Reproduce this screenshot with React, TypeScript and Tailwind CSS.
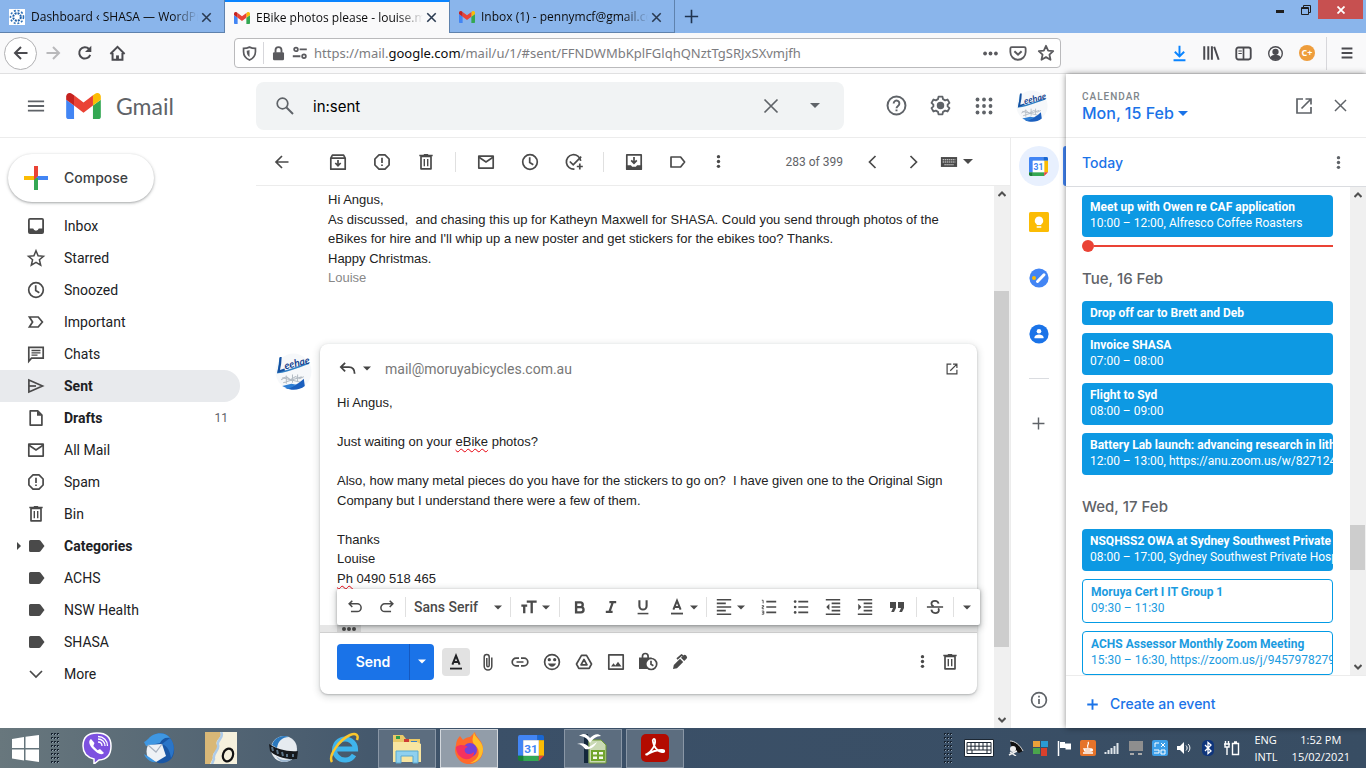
import type { ReactNode } from "react"
import clsx from "clsx"

const icons: Record<string, ReactNode> = {
  inbox: <path fill="currentColor" stroke="none" fillRule="evenodd" d="M4 2h12a2 2 0 0 1 2 2v12a2 2 0 0 1-2 2H4a2 2 0 0 1-2-2V4a2 2 0 0 1 2-2zM3.8 3.8v8.800h3.400a2.900 2.900 0 0 0 5.600 0h3.400V3.800z" />,
  star: <path d="M10 2.800l2.100 5 5.400.5-4.100 3.500 1.300 5.300-4.700-2.800-4.700 2.800 1.300-5.300L2.500 8.300l5.400-.5z" strokeWidth="1.500" />,
  clock: <><circle cx="10" cy="10" r="7.300" /><path d="M9.700 5.300v5.200l3.600 2.200" /></>,
  important: <path d="M3.400 5h8.800l4.200 5-4.200 5H3.400l3.200-5z" />,
  chat: <><path d="M2.800 17.200V3.300h14.400v10.900H5.500z" /><path d="M5.500 6.500h9M5.500 8.800h9M5.500 11.100h6" strokeWidth="1.300" /></>,
  send: <><path d="M2.900 4v12L16.500 10z" /><path d="M3 10h7" /></>,
  file: <><path d="M4.200 2.900h7.500l4.200 4.200v10H4.200z" strokeLinejoin="round" /><path d="M11 2.800v5h5z" fill="currentColor" stroke="none" /></>,
  mail: <><path d="M2.800 4.200h14.400v11.900H2.800z" strokeLinejoin="round" /><path d="M3 5.200l7 4.800 7-4.800" /></>,
  spam: <><path d="M7 2.900h6L17.100 7v6L13 17.100H7L2.900 13V7z" strokeLinejoin="round" /><path d="M10 5.700v5.300M10 12.400v1.700" /></>,
  bin: <><path d="M5 4.500h10v12.300H5z" strokeLinejoin="round" /><path d="M3.300 3.500h13.400M7.800 2.900h4.400" /><path d="M8.300 7v7.300M11.700 7v7.300" strokeWidth="1.400" /></>,
  label: <path fill="currentColor" stroke="none" d="M4.500 4H13a2 2 0 0 1 1.500.8L18.500 10l-4 5.200a2 2 0 0 1-1.500.8H4.500A1.500 1.500 0 0 1 3 14.500v-9A1.500 1.500 0 0 1 4.500 4z" />,
  labelOutline: <path d="M3 5h9.600l4 5-4 5H3z" strokeLinejoin="round" />,
  down: <path d="M4 7l6 6 6-6" />,
  left: <path d="M12.500 4l-6 6 6 6" />,
  right: <path d="M7.500 4l6 6-6 6" />,
  back: <path d="M16.500 10H4M10 4l-6 6 6 6" />,
  archive: <><path d="M2.800 6.200l1.600-3h11.200l1.600 3v11H2.800zM2.800 6.200h14.400" strokeLinejoin="round" /><path d="M10 8v5.500M7.300 11l2.700 2.700 2.700-2.700" /></>,
  moveTo: <><path d="M2.800 2.900h14.400v14.200H2.800z" strokeLinejoin="round" /><path d="M2.800 14h3.700l1.200 1.500h4.600l1.200-1.500h3.700v3H2.800z" fill="currentColor" /><path d="M10 5v6M7.200 8.400L10 11.200l2.800-2.800" /></>,
  task: <><path d="M16.700 8.800A7.200 7.200 0 1 0 10.500 17" /><path d="M5.800 9.500l3.400 3.400 8-8.300M15.800 11.500v6M12.800 14.500h6" /></>,
  dots: <g fill="currentColor" stroke="none"><circle cx="10" cy="4.300" r="2" /><circle cx="10" cy="10" r="2" /><circle cx="10" cy="15.700" r="2" /></g>,
  menu: <path d="M1 4.800h18M1 10h18M1 15.200h18" strokeWidth="2" />,
  burger: <path d="M1 2.500h18M1 10h18M1 17.500h18" strokeWidth="3.200" />,
  close: <path d="M3.500 3.500l13 13M16.500 3.500l-13 13" />,
  search: <><circle cx="7.500" cy="7.500" r="5.300" /><path d="M11.500 11.500l6.500 6.500" strokeWidth="2" /></>,
  help: <><circle cx="10" cy="10" r="7.800" /><path d="M7.500 8.200a2.500 2.500 0 1 1 4 2c-.9.700-1.500 1.200-1.500 2.200M10 13.400v1.600" /></>,
  gear: <><path d="M8.300 2.300h3.400l.5 2.200 1.800 1 2.100-.7 1.700 2.900-1.600 1.500v1.600l1.600 1.500-1.700 2.900-2.100-.7-1.800 1-.5 2.200H8.300l-.5-2.200-1.800-1-2.100.7-1.700-2.900 1.600-1.500V9.200L2.200 7.700l1.700-2.900 2.100.7 1.800-1z" strokeLinejoin="round" strokeWidth="1.600" /><circle cx="10" cy="10" r="2.400" fill="currentColor" /></>,
  apps: <g fill="currentColor" stroke="none">{[3.500, 10, 16.500].map((y) => [3.500, 10, 16.500].map((x) => <circle key={x + "-" + y} cx={x} cy={y} r="1.900" />))}</g>,
  keyboard: <><path d="M1 4.500h18v11H1z" fill="currentColor" stroke="none" /><path d="M3 7.500h14M3 10h14M5 13h10" stroke="#fff" strokeWidth="1.200" strokeDasharray="1.300 .9" /></>,
  reply: <path d="M7.500 4L3 8.500 7.500 13M3.500 8.500h8c3.500 0 6 1.500 6 7" strokeWidth="1.900" />,
  popout: <path d="M9 3H3v14h14v-6M11.500 3H17v5.500M17 3l-9.500 9.500" />,
  plus: <path d="M10 3v14M3 10h14" />,
  info: <><circle cx="10" cy="10" r="7.400" /><path d="M10 9v5M10 5.800v1.700" /></>,
  undo: <path d="M7 3L3.500 6.500 7 10M4 6.500h8.500a4.300 4.300 0 0 1 0 8.600H5.500" />,
  redo: <path d="M13 3l3.500 3.500L13 10M16 6.500H7.500a4.300 4.300 0 0 0 0 8.600h7" />,
  bold: <path d="M6 4h5a2.800 2.800 0 0 1 0 5.600H6zM6 9.600h5.700a3 3 0 0 1 0 6.100H6z" strokeWidth="2.800" />,
  italic: <path d="M8 4h8.500M3.500 16H12M12.300 4L8 16" strokeWidth="2.800" />,
  underline: <><path d="M6 2.500v6.300a4 4 0 0 0 8 0V2.500" strokeWidth="2.300" /><path d="M4 17.300h12" /></>,
  color: <><path d="M6 13l4-10 4 10M7.500 10h5" strokeWidth="2.200" /><path d="M3.300 17.300h13.400" strokeWidth="2" /></>,
  align: <path d="M2 2h16M2 6h10M2 10h16M2 14h10M2 18h16" strokeWidth="1.800" />,
  ordered: <><path d="M7 4h11M7 10h11M7 16h11" strokeWidth="1.800" /><path d="M2 2.500h1.500V6M2 8.500h2v1.500H2.500v2H4.500M2 14.500h2.200V18H2M2.500 16.200h1.500" strokeWidth="1" /></>,
  bullets: <><path d="M7 4h11M7 10h11M7 16h11" strokeWidth="1.800" /><g fill="currentColor" stroke="none"><circle cx="3.500" cy="4" r="1.500" /><circle cx="3.500" cy="10" r="1.500" /><circle cx="3.500" cy="16" r="1.500" /></g></>,
  outdent: <><path d="M2 2h16M8.500 6H18M8.500 10H18M8.500 14H18M2 18h16" strokeWidth="1.800" /><path d="M6 6.500v7L2.500 10z" fill="currentColor" stroke="none" /></>,
  indent: <><path d="M2 2h16M8.500 6H18M8.500 10H18M8.500 14H18M2 18h16" strokeWidth="1.800" /><path d="M2.500 6.500v7L6 10z" fill="currentColor" stroke="none" /></>,
  quote: <path d="M3 5h6v6l-2 4H4.200l1.800-4H3zM11 5h6v6l-2 4h-2.800l1.800-4h-3z" fill="currentColor" stroke="none" />,
  strike: <><path d="M14 6.300C13.500 4 12 3.200 10 3.200c-2.500 0-4 1.300-4 3.200 0 1.500 1 2.300 2.500 2.900M6 13c.3 2.500 2 3.700 4.200 3.700s4.100-1.200 4.100-3.300c0-.8-.3-1.400-.8-1.900" strokeWidth="2" /><path d="M1 10h18" /></>,
  clip: <path d="M13.800 5.500v8.700a3.800 3.800 0 0 1-7.600 0V5a2.500 2.500 0 0 1 5 0v8.500a1.200 1.200 0 0 1-2.400 0V6" strokeWidth="1.500" />,
  link: <path d="M9 6.200H6a3.800 3.800 0 0 0 0 7.600h3M11 6.200h3a3.800 3.800 0 0 1 0 7.600h-3M6.500 10h7" />,
  smile: <><circle cx="10" cy="10" r="7.400" /><path d="M6 11.500h8c-.6 2-2.200 3.200-4 3.200S6.600 13.500 6 11.500z" fill="currentColor" stroke="none" /><circle cx="7.300" cy="7.700" r=".8" fill="currentColor" /><circle cx="12.700" cy="7.700" r=".8" fill="currentColor" /></>,
  drive: <><path d="M7.500 3.300h5l5 8.700-2.300 4.300H4.800L2.500 12z" strokeLinejoin="round" /><path d="M10 7.500l3 5.300H7z" strokeLinejoin="round" /></>,
  image: <><path d="M2.800 2.900h14.400v14.200H2.800z" strokeLinejoin="round" /><path d="M5 14.500l2.500-3.300 1.800 2.200L12 9.800l3.500 4.700z" fill="currentColor" stroke="none" /></>,
  lock: <><path d="M4.500 6.500V4.300a2.800 2.800 0 0 1 5.600 0v2.200" /><path d="M1 5.500h12.500V17H1z" fill="currentColor" stroke="none" /><circle cx="13.200" cy="12" r="5.500" fill="#fff" /><path d="M13 8.700v3.600l2.400 1.500" /></>,
  pen: <><path d="M3 17l.8-4L10 6.800 13.200 10 7 16.200zM11 5.800l2.300-2.300a2 2 0 0 1 2.800 0l.4.4a2 2 0 0 1 0 2.800L14.200 9z" fill="currentColor" stroke="none" /><path d="M7 7l4.500-4 1.500 1" /></>,
  reload: <><path d="M15.800 12A6.300 6.300 0 1 1 14.500 5.500" strokeWidth="2.200" /><path d="M17 2v7h-7z" fill="currentColor" stroke="none" /></>,
  home: <><path d="M2.500 10.500L10 3l7.500 7.500" strokeWidth="2" /><path d="M4.800 9.500v7.200h10.400V9.500" strokeWidth="2.100" /><path d="M10 17v-5" strokeWidth="3" /></>,
  shield: <><path d="M10 2.500c2 1 4.500 1.500 7 1.500v4c0 5-3 8-7 9.700C6 16 3 13 3 8V4c2.500 0 5-.5 7-1.500z" strokeWidth="2" /><path d="M10 6v8c-2-1-3.300-3.300-3.300-7.300C8 6.700 9 6.500 10 6z" fill="currentColor" stroke="none" /></>,
  padlock: <><path d="M6.500 9V6a3.500 3.500 0 0 1 7 0v3" strokeWidth="2.200" /><rect x="3.500" y="8.500" width="13" height="9.500" rx="1.500" fill="currentColor" stroke="none" /></>,
  perms: <><circle cx="5" cy="5.500" r="2.300" strokeWidth="2.200" /><path d="M9.500 5.500h9M1 14h9.500" strokeWidth="2.400" /><circle cx="15" cy="14" r="2.300" strokeWidth="2.200" /></>,
  pocket: <><path d="M3 3.500h14a1.500 1.500 0 0 1 1.500 1.500v4a8.500 8.500 0 0 1-17 0V5A1.500 1.500 0 0 1 3 3.500z" strokeWidth="2" /><path d="M6 8l4 3.800L14 8" strokeWidth="2.200" /></>,
  bookmark: <path d="M10 2l2.400 5.300 5.600.6-4.200 3.900 1.200 5.700L10 14.600l-5 2.900 1.200-5.700L2 7.900l5.600-.6z" strokeWidth="2" strokeLinejoin="round" />,
  download: <path d="M10 1v12M4.500 8L10 13.500 15.500 8M3 18h14" strokeWidth="2.300" />,
  library: <path d="M2.500 2.500v15M7 2.500v15M11 2.500v15M13.500 3l5 14.500" strokeWidth="2.200" />,
  sidebar: <><rect x="1.500" y="3" width="17" height="14" rx="2.500" strokeWidth="2.200" /><path d="M10 3v14" strokeWidth="2" /><path d="M4 7h4M4 10h4" strokeWidth="1.300" /></>,
  account: <><circle cx="10" cy="10" r="8" strokeWidth="1.600" /><circle cx="10" cy="8" r="3.700" fill="currentColor" stroke="none" /><path d="M4 14.500c1-2.200 3.500-3 6-3s5 .8 6 3a7.500 7.500 0 0 1-12 0z" fill="currentColor" stroke="none" /></>,
  textSize: <path d="M7.500 4h11M13 4v13M1.500 8.500h6.500M4.700 8.500V17" strokeWidth="2.600" />,
}

const Icon = ({ name, size = 20, className }: { name: string; size?: number; className?: string }) => (
  <svg width={size} height={size} viewBox="0 0 20 20" fill="none" stroke="currentColor" strokeWidth="1.700" className={clsx("shrink-0", className)} aria-hidden="true">
    {icons[name]}
  </svg>
)

const Caret = ({ className }: { className?: string }) => (
  <svg width="10" height="5" viewBox="0 0 10 5" className={clsx("shrink-0", className)} aria-hidden="true"><path d="M0 0h10L5 5z" fill="currentColor" /></svg>
)

interface IconButtonProps {
  icon: string
  label: string
  size?: number
  className?: string
}

const IconButton = ({ icon, label, size, className }: IconButtonProps) => (
  <button aria-label={label} className={clsx("flex shrink-0 items-center justify-center cursor-pointer", className)}>
    <Icon name={icon} size={size} />
  </button>
)

const GmailLogo = ({ className }: { className?: string }) => (
  <svg viewBox="52 42 88 66" className={clsx("shrink-0", className)} aria-hidden="true">
    <path fill="#4285f4" d="M58 108h14V74L52 59v43c0 3.320 2.690 6 6 6" />
    <path fill="#34a853" d="M120 108h14c3.320 0 6-2.690 6-6V59l-20 15" />
    <path fill="#fbbc04" d="M120 48v26l20-15v-8c0-7.420-8.470-11.650-14.400-7.200" />
    <path fill="#ea4335" d="M72 74V48l24 18 24-18v26L96 92" />
    <path fill="#c5221f" d="M52 51v8l20 15V48l-5.600-4.200c-5.940-4.450-14.400-.220-14.400 7.200" />
  </svg>
)

const CalendarLogo = ({ size }: { size: number }) => (
  <svg width={size} height={size} viewBox="0 0 20 20" aria-hidden="true">
    <path d="M1.500 0H15v4H4v12H0V1.500A1.500 1.500 0 0 1 1.500 0z" fill="#4285f4" />
    <path d="M16 0h2.500A1.500 1.500 0 0 1 20 1.500V4h-5V0z" fill="#1967d2" />
    <path d="M16 4h4v12h-4z" fill="#fbbc04" />
    <path d="M4 16h12v4H4z" fill="#34a853" />
    <path d="M0 16h4v4H1.500A1.500 1.500 0 0 1 0 18.500z" fill="#188038" />
    <path d="M16 16h4l-4 4z" fill="#ea4335" />
    <path d="M4 4h12v12H4z" fill="#fff" />
    <text x="10" y="13.500" textAnchor="middle" fontSize="9" fontWeight="700" fontFamily="Roboto, sans-serif" fill="#4285f4">31</text>
  </svg>
)

const Avatar = ({ size }: { size: number }) => (
  <svg width={size} height={size} viewBox="0 0 36 36" className="shrink-0" aria-hidden="true">
    <circle cx="18" cy="18" r="17.500" fill="#f6f8fa" />
    <path d="M5 5c-.5 6-1 9-2 14 9-1 18-5 30-9" fill="none" stroke="#2f7fc4" strokeWidth="1.500" />
    <path d="M5.500 4c0 5-1 10-2 14l6-2" fill="none" stroke="#1450a0" strokeWidth="2" />
    <text x="10" y="16" fontSize="10" fontStyle="italic" fontFamily="Lato, sans-serif" fontWeight="700" fill="#16438f" transform="rotate(-14 10 16)">eehae</text>
    <path d="M6 26l5-3 4 3 5-3 4 2 4-2M8 29l18-6M7 24l20 5M11 22v8M17 21v8M22 21v7" fill="none" stroke="#b4bcc4" strokeWidth="1" />
    <path d="M10 34c8-1 14-5 18-9l1 7c-5 4-12 5-19 2z" fill="#1b5fbe" />
    <path d="M7 32l9-2 5 1-8 4z" fill="#2f7fd4" />
  </svg>
)

const tabs = [
  { title: "Dashboard ‹ SHASA — WordPress", icon: "site" },
  { title: "EBike photos please - louise.mcf@gmail", icon: "gmail", active: true },
  { title: "Inbox (1) - pennymcf@gmail.com", icon: "gmail" },
]

const BrowserChrome = () => (
  <header className="shrink-0 font-['Open_Sans',sans-serif]">
    <div className="flex h-[33px] bg-[#8ab5eb]">
      {tabs.map((tab) => (
        <div
          key={tab.title}
          className={clsx(
            "flex w-[225px] shrink-0 items-center border-r border-r-[#5f82ad] pr-[11px] pl-[9px]",
            tab.active ? "border-t-2 border-t-[#0a84ff] bg-[#f9f9fa]" : "border-b border-b-[#5f82ad] pt-[2px]"
          )}
        >
          {tab.icon === "site" ? (
            <svg width="16" height="16" viewBox="0 0 16 16" className="shrink-0" aria-hidden="true">
              <path d="M0 0h16v16H0z" fill="#fff" />
              <circle cx="8" cy="8" r="3.800" fill="none" stroke="#1d5fa8" strokeWidth="2" strokeDasharray="2 1" />
              <circle cx="8" cy="8" r="6.500" fill="none" stroke="#2d71b8" strokeWidth="1.600" strokeDasharray="2 1.800" />
            </svg>
          ) : (
            <GmailLogo className="h-3 w-4" />
          )}
          <a href="#" className="ml-[6px] flex-1 overflow-hidden text-xs whitespace-nowrap text-[#0c0c0d] [mask-image:linear-gradient(to_right,black_85%,transparent)]">
            {tab.title}
          </a>
          <IconButton icon="close" label="Close tab" size={13} className="ml-[2px] text-[#2a3a50] [&_svg]:[stroke-width:2.4]" />
        </div>
      ))}
      <IconButton icon="plus" label="New tab" size={19} className="w-8 text-[#20344f]" />
      <div className="ml-auto flex h-[19px] pr-[3px]">
        <button aria-label="Minimise" className="flex w-7 items-center justify-center pt-1"><span className="h-[3px] w-2 bg-[#1e1e1e]" /></button>
        <button aria-label="Restore" className="flex w-6 items-center justify-center">
          <svg width="10" height="10" viewBox="0 0 10 10" fill="none" stroke="#1e1e1e"><path d="M.5 2.500h7v7h-7zM.5 3.500h7M2.500 2V.500h7v7H8" /></svg>
        </button>
        <button aria-label="Close window" className="flex w-[45px] items-center justify-center bg-[#c75050] text-white">
          <svg width="8" height="8" viewBox="0 0 8 8" stroke="currentColor" strokeWidth="1.800"><path d="M.5.5l7 7M7.500.5l-7 7" /></svg>
        </button>
      </div>
    </div>
    <div className="flex h-[41px] items-center border-b border-[#e0e0e1] bg-[#f9f9fa] text-[#4a4a4f]">
      <button aria-label="Back" className="ml-1 flex size-[33px] shrink-0 items-center justify-center rounded-full border border-[#b1b1b3] bg-white"><Icon name="back" size={20} className="[stroke-width:2]" /></button>
      <button aria-label="Forward" className="flex w-8 justify-center text-[#b9b9bb]"><Icon name="back" className="rotate-180 [stroke-width:2]" /></button>
      <IconButton icon="reload" label="Reload" size={18} className="w-8" />
      <IconButton icon="home" label="Home" size={19} className="w-8" />
      <div className="ml-[101px] flex h-[30px] w-[827px] min-w-0 shrink items-center rounded-sm border border-[#bababc] bg-white text-[#5a5a5e]">
        <IconButton icon="shield" label="Tracking protection" size={17} className="w-7" />
        <span className="h-[22px] w-px bg-[#d7d7db]" />
        <IconButton icon="padlock" label="Site security" size={17} className="w-7" />
        <Icon name="perms" size={16} />
        <div role="textbox" aria-label="Address" className="ml-[6px] flex-1 overflow-hidden pt-[2px] font-['Noto_Sans',sans-serif] text-[13px] whitespace-nowrap text-[#7c7c80]">
          https://mail.<span className="text-[#0c0c0d]">google.com</span>/mail/u/1/#sent/FFNDWMbKplFGlqhQNztTgSRJxSXvmjfh
        </div>
        <button aria-label="Page actions" className="flex w-7 justify-center"><Icon name="dots" size={19} className="rotate-90" /></button>
        <IconButton icon="pocket" label="Save to Pocket" size={18} className="w-7" />
        <IconButton icon="bookmark" label="Bookmark" size={18} className="w-7" />
      </div>
      <div className="ml-auto flex h-full items-center">
        <IconButton icon="download" label="Downloads" size={17} className="w-8 text-[#0a84ff]" />
        <IconButton icon="library" label="Library" size={18} className="w-8" />
        <IconButton icon="sidebar" label="Sidebar" size={17} className="w-8" />
        <IconButton icon="account" label="Account" size={17} className="w-8" />
        <button aria-label="Extension" className="flex w-8 justify-center"><span className="flex size-4 items-center justify-center rounded-full bg-[#ee9d3c] text-[9px] font-bold text-white">C+</span></button>
        <span className="ml-[3px] h-[33px] w-px bg-[#d7d7db]" />
        <IconButton icon="burger" label="Menu" size={12} className="w-[39px]" />
      </div>
    </div>
  </header>
)

const GmailHeader = () => (
  <div className="flex h-16 shrink-0 items-center border-b border-[#ececec] text-[#5f6368]">
    <IconButton icon="menu" label="Main menu" size={18} className="ml-[18px] w-9" />
    <GmailLogo className="ml-3 h-[26px] w-[35px]" />
    <span className="ml-[15px] w-[140px] pt-[2px] font-[Lato,sans-serif] text-[23px]">Gmail</span>
    <div className="flex h-12 max-w-[588px] flex-1 items-center rounded-lg bg-[#f1f3f4]">
      <IconButton icon="search" label="Search" size={20} className="w-[57px]" />
      <input aria-label="Search mail" defaultValue="in:sent" className="min-w-0 flex-1 bg-transparent pt-1 font-[Inter,sans-serif] text-[15px] text-black outline-none" />
      <IconButton icon="close" label="Clear search" size={20} className="w-11" />
      <button aria-label="Search options" className="mr-[7px] flex w-11 justify-center"><Caret /></button>
    </div>
    <div className="ml-auto flex items-center pr-[18px]">
      <IconButton icon="help" label="Support" size={23} className="w-11" />
      <IconButton icon="gear" label="Settings" size={23} className="w-11" />
      <IconButton icon="apps" label="Google apps" size={20} className="w-11" />
      <button aria-label="Google account" className="ml-[10px]"><Avatar size={32} /></button>
    </div>
  </div>
)

const folders = [
  { name: "Inbox", icon: "inbox" },
  { name: "Starred", icon: "star" },
  { name: "Snoozed", icon: "clock" },
  { name: "Important", icon: "important" },
  { name: "Chats", icon: "chat" },
  { name: "Sent", icon: "send", bold: true, selected: true },
  { name: "Drafts", icon: "file", bold: true, count: 11 },
  { name: "All Mail", icon: "mail" },
  { name: "Spam", icon: "spam" },
  { name: "Bin", icon: "bin" },
  { name: "Categories", icon: "label", bold: true, expandable: true },
  { name: "ACHS", icon: "label" },
  { name: "NSW Health", icon: "label" },
  { name: "SHASA", icon: "label" },
  { name: "More", icon: "down" },
]

const Sidebar = () => (
  <nav className="w-64 shrink-0 pt-4">
    <button className="mb-2 ml-2 flex h-12 w-[146px] items-center rounded-full bg-white pl-4 font-[Inter,sans-serif] text-sm font-medium text-[#3c4043] shadow-[0_1px_2px_rgba(60,64,67,0.3),0_1px_3px_1px_rgba(60,64,67,0.15)]">
      <svg width="24" height="24" viewBox="0 0 24 24" className="mr-4" aria-hidden="true">
        <path fill="#fbbc04" d="M0 10h12v4H0z" />
        <path fill="#4285f4" d="M12 10h12v4H12z" />
        <path fill="#34a853" d="M10 12h4v12h-4z" />
        <path fill="#ea4335" d="M10 0h4v10l-4 4z" />
      </svg>
      Compose
    </button>
    {folders.map((folder) => (
      <a
        key={folder.name}
        href="#"
        className={clsx(
          "mr-4 flex h-8 items-center rounded-r-full pr-3 text-sm text-[#202124]",
          folder.bold && "font-bold",
          folder.selected && "bg-[#e8eaed]"
        )}
      >
        <span className="flex w-[26px] justify-end pr-[5px] text-[#444746]">
          {folder.expandable && <svg width="4" height="8" viewBox="0 0 4 8"><path d="M0 0l4 4-4 4z" fill="currentColor" /></svg>}
        </span>
        <Icon name={folder.icon} className="text-[#4a4a4a]" />
        <span className="ml-[18px] flex-1">{folder.name}</span>
        {folder.count && <span className="text-xs font-normal text-[#5f6368]">{folder.count}</span>}
      </a>
    ))}
  </nav>
)

const MailToolbar = () => (
  <div className="flex h-12 shrink-0 items-center border-b border-[#ececec] text-[#4a4a4a]">
    <IconButton icon="back" label="Back to Sent" className="mr-2 w-[52px]" />
    <IconButton icon="archive" label="Archive" className="w-11" />
    <IconButton icon="spam" label="Report spam" className="w-11" />
    <IconButton icon="bin" label="Delete" className="w-11" />
    <span className="mr-2 ml-[7px] h-5 w-px bg-[#e0e0e0]" />
    <IconButton icon="mail" label="Mark as unread" className="w-11" />
    <IconButton icon="clock" label="Snooze" className="w-11" />
    <IconButton icon="task" label="Add to tasks" className="w-11" />
    <span className="mr-2 ml-[7px] h-5 w-px bg-[#e0e0e0]" />
    <IconButton icon="moveTo" label="Move to" className="w-11" />
    <IconButton icon="labelOutline" label="Labels" className="w-11" />
    <IconButton icon="dots" label="More" size={17} className="w-9" />
    <span className="mr-[10px] ml-auto text-xs text-[#5f6368]">283 of 399</span>
    <IconButton icon="left" label="Newer" className="w-10" />
    <IconButton icon="right" label="Older" className="w-10" />
    <button aria-label="Input tools" className="mr-[37px] ml-[7px] flex items-center"><Icon name="keyboard" size={18} /><Caret className="ml-[5px]" /></button>
  </div>
)

const Scrollbar = ({ thumbClass }: { thumbClass: string }) => (
  <div className="relative flex w-4 shrink-0 flex-col items-center justify-between bg-[#f0f0f0] py-1 text-[#505050]">
    <svg width="8" height="8" viewBox="0 0 8 8" fill="none" stroke="currentColor" strokeWidth="2"><path d="M.5 6L4 2.500 7.500 6" /></svg>
    <span className={clsx("absolute right-px left-0 bg-[#cdcdcd]", thumbClass)} />
    <svg width="8" height="8" viewBox="0 0 8 8" fill="none" stroke="currentColor" strokeWidth="2"><path d="M.5 2L4 5.500 7.500 2" /></svg>
  </div>
)

const Separator = () => <span className="h-5 w-px shrink-0 bg-[#e0e0e0]" />

const misspelt = "underline decoration-red-600 decoration-wavy decoration-1 underline-offset-2"

const ReplyCard = () => (
  <div className="flex h-[350px] flex-col rounded-lg bg-white shadow-[0_1px_2px_rgba(60,64,67,0.3),0_2px_6px_2px_rgba(60,64,67,0.15)]">
    <div className="flex h-[49px] shrink-0 items-center pr-[18px] pl-[18px] text-[#444]">
      <button aria-label="Type of response" className="flex items-center"><Icon name="reply" size={19} /><Caret className="ml-[6px] w-2" /></button>
      <span className="ml-[14px] flex-1 pt-px text-sm text-[#777]">mail@moruyabicycles.com.au</span>
      <IconButton icon="popout" label="Pop out reply" size={14} />
    </div>
    <div role="textbox" aria-label="Message body" contentEditable suppressContentEditableWarning spellCheck={false} className="min-h-0 flex-1 overflow-hidden px-[17px] font-['Liberation_Sans',sans-serif] text-[13px] leading-normal text-[#222] outline-none">
      <p>Hi Angus,</p>
      <br />
      <p>Just waiting on your <span className={misspelt}>eBike</span> photos?</p>
      <br />
      <p>Also, how many metal pieces do you have for the stickers to go on?&nbsp; I have given one to the Original Sign Company but I understand there were a few of them.</p>
      <br />
      <p>Thanks</p>
      <p>Louise</p>
      <p><span className={misspelt}>Ph</span> 0490 518 465</p>
    </div>
    <div className="z-10 -mr-[3px] ml-[17px] flex h-9 shrink-0 items-center rounded-xs bg-white text-[#4a4a4a] shadow-[0_1px_3px_rgba(60,64,67,0.4),0_2px_6px_2px_rgba(60,64,67,0.2)]">
      <IconButton icon="undo" label="Undo" size={18} className="ml-[2px] w-8" />
      <IconButton icon="redo" label="Redo" size={18} className="mr-[2px] w-8" />
      <Separator />
      <label className="flex items-center">
        <select aria-label="Font" className="w-[88px] appearance-none pl-2 text-sm font-medium outline-none"><option>Sans Serif</option></select>
        <Caret className="mr-2 w-2" />
      </label>
      <Separator />
      <button aria-label="Size" className="flex w-12 items-center justify-center gap-1"><Icon name="textSize" size={18} /><Caret className="w-2" /></button>
      <Separator />
      <IconButton icon="bold" label="Bold" size={17} className="ml-[3px] w-8" />
      <IconButton icon="italic" label="Italic" size={16} className="w-8" />
      <IconButton icon="underline" label="Underline" size={18} className="w-8" />
      <button aria-label="Text colour" className="flex w-[47px] items-center justify-center gap-1"><Icon name="color" size={18} /><Caret className="w-2" /></button>
      <Separator />
      <button aria-label="Align" className="flex w-[46px] items-center justify-center gap-1"><Icon name="align" size={18} /><Caret className="w-2" /></button>
      <IconButton icon="ordered" label="Numbered list" size={18} className="w-8" />
      <IconButton icon="bullets" label="Bulleted list" size={18} className="w-8" />
      <IconButton icon="outdent" label="Indent less" size={18} className="w-8" />
      <IconButton icon="indent" label="Indent more" size={18} className="w-8" />
      <IconButton icon="quote" label="Quote" size={20} className="mr-[3px] w-8" />
      <Separator />
      <IconButton icon="strike" label="Strikethrough" size={18} className="w-9" />
      <Separator />
      <button aria-label="More formatting options" className="flex flex-1 justify-center"><Caret className="w-2" /></button>
    </div>
    <div className="h-2 shrink-0 overflow-hidden border-b border-[#d0d0d0] bg-[#e6e6e6] pl-[17px]">
      <button aria-label="Show trimmed content" className="flex h-2 w-6 items-center justify-center gap-px bg-[#d0d0d0]">
        <i className="size-1 rounded-full bg-[#444]" />
        <i className="size-1 rounded-full bg-[#444]" />
        <i className="size-1 rounded-full bg-[#444]" />
      </button>
    </div>
    <div className="flex h-[61px] shrink-0 items-center pr-[11px] pb-1 pl-[17px] text-[#4a4a4a]">
      <div className="mr-2 flex h-9 overflow-hidden rounded bg-[#1a73e8] text-white">
        <button className="w-[73px] border-r border-[#1559c0] font-[Inter,sans-serif] text-sm font-semibold">Send</button>
        <button aria-label="More send options" className="flex w-6 items-center justify-center"><Caret className="w-2" /></button>
      </div>
      <button aria-label="Formatting options" className="mr-[2px] flex size-7 items-center justify-center rounded bg-[#e2e2e2] text-[#202124]"><Icon name="color" size={18} /></button>
      <IconButton icon="clip" label="Attach files" className="w-8" />
      <IconButton icon="link" label="Insert link" className="w-8" />
      <IconButton icon="smile" label="Insert emoji" className="w-8" />
      <IconButton icon="drive" label="Insert from Drive" className="w-8" />
      <IconButton icon="image" label="Insert photo" className="w-8" />
      <IconButton icon="lock" label="Confidential mode" className="w-8" />
      <IconButton icon="pen" label="Insert signature" className="w-8" />
      <IconButton icon="dots" label="More options" size={17} className="ml-auto w-6" />
      <IconButton icon="bin" label="Discard draft" className="w-8" />
    </div>
  </div>
)

const Conversation = () => (
  <div className="min-w-0 flex-1 overflow-hidden pr-[17px]">
    <div className="ml-[72px] h-[158px] pt-1 pr-4 font-['Liberation_Sans',sans-serif] text-[13px] leading-normal text-[#222]">
      <p>Hi Angus,</p>
      <p>As discussed,&nbsp; and chasing this up for Katheyn Maxwell for SHASA. Could you send through photos of the eBikes for hire and I'll whip up a new poster and get stickers for the ebikes too? Thanks.</p>
      <p>Happy Christmas.</p>
      <p className="text-[#888]">Louise</p>
    </div>
    <div className="flex">
      <div className="w-16 shrink-0 pt-[9px] pl-[19px]"><Avatar size={37} /></div>
      <div className="min-w-0 flex-1"><ReplyCard /></div>
    </div>
  </div>
)

const SidePanel = () => (
  <aside className="flex w-14 shrink-0 flex-col items-center border-l border-[#ececec] pt-2 text-[#5f6368]">
    <div className="relative mb-4 flex w-full justify-center">
      <button aria-label="Calendar" className="flex size-10 items-center justify-center rounded-full bg-[#e8f0fe]"><CalendarLogo size={19} /></button>
      <span className="absolute top-0 right-0 h-10 w-[3px] rounded-l bg-[#4285f4]" />
    </div>
    <button aria-label="Keep" className="mb-4 flex size-10 items-center justify-center">
      <svg width="20" height="20" viewBox="0 0 20 20"><rect width="20" height="20" rx="1.500" fill="#fbbc04" /><path d="M10 4.500a4.200 4.200 0 0 0-2.300 7.700V13h4.600v-.8A4.200 4.200 0 0 0 10 4.500zM7.700 14.200h4.600v1.500H7.700z" fill="#fff" /></svg>
    </button>
    <button aria-label="Tasks" className="mb-4 flex size-10 items-center justify-center">
      <svg width="20" height="20" viewBox="0 0 20 20"><circle cx="10" cy="10" r="9.600" fill="#4285f4" /><circle cx="5" cy="10" r="2" fill="#fbbc04" /><path d="M8.500 13.500l6.500-6.700" stroke="#fff" strokeWidth="3" strokeLinecap="round" /></svg>
    </button>
    <button aria-label="Contacts" className="flex size-10 items-center justify-center">
      <svg width="20" height="20" viewBox="0 0 20 20"><circle cx="10" cy="10" r="9.600" fill="#1a73e8" /><circle cx="10" cy="7.200" r="2.300" fill="#fff" /><path d="M5.500 14.300v-1c0-1.800 2.500-2.800 4.500-2.800s4.500 1 4.500 2.800v1z" fill="#fff" /></svg>
    </button>
    <span className="mt-6 h-px w-5 bg-[#dadce0]" />
    <IconButton icon="plus" label="Get add-ons" size={17} className="mt-6 size-10" />
    <IconButton icon="info" label="Side panel info" className="mt-auto mb-2 size-10" />
  </aside>
)

interface CalendarEvent {
  title: string
  time?: string
  outlined?: boolean
}

const EventCard = ({ title, time, outlined }: CalendarEvent) => (
  <a
    href="#"
    className={clsx(
      "mb-2 block overflow-hidden rounded px-2 pt-1 text-xs leading-4 whitespace-nowrap",
      time ? "pb-[6px]" : "pb-1",
      outlined ? "border border-[#039be5] bg-white text-[#1b9be0]" : "bg-[#0d99e3] text-white"
    )}
  >
    <div className="font-bold">{title}</div>
    {time && <div>{time}</div>}
  </a>
)

const tuesday: CalendarEvent[] = [
  { title: "Drop off car to Brett and Deb" },
  { title: "Invoice SHASA", time: "07:00 – 08:00" },
  { title: "Flight to Syd", time: "08:00 – 09:00" },
  { title: "Battery Lab launch: advancing research in lithium", time: "12:00 – 13:00, https://anu.zoom.us/w/82712488" },
]

const wednesday: CalendarEvent[] = [
  { title: "NSQHSS2 OWA at Sydney Southwest Private Hospital", time: "08:00 – 17:00, Sydney Southwest Private Hospital" },
  { title: "Moruya Cert I IT Group 1", time: "09:30 – 11:30", outlined: true },
  { title: "ACHS Assessor Monthly Zoom Meeting", time: "15:30 – 16:30, https://zoom.us/j/94579782794", outlined: true },
]

const CalendarPanel = () => (
  <aside className="z-10 flex w-[300px] shrink-0 flex-col bg-white text-[#5f6368] shadow-[0_0_6px_rgba(0,0,0,0.45)]">
    <div className="flex h-16 shrink-0 items-center border-b border-[#ececec] pl-4">
      <div className="flex-1 pt-[3px]">
        <div className="text-[10px] leading-3 font-medium tracking-[1px] text-[#80868b]">CALENDAR</div>
        <button className="flex items-center font-[Inter,sans-serif] text-base leading-5 font-medium text-[#1a73e8]">Mon, 15 Feb<Caret className="ml-1" /></button>
      </div>
      <IconButton icon="popout" label="Open in new tab" size={20} className="w-9" />
      <IconButton icon="close" label="Close" size={17} className="mr-2 w-9" />
    </div>
    <div className="flex h-[49px] shrink-0 items-center border-b border-[#dadce0] pr-[10px] pl-4">
      <button className="flex-1 pt-px text-left font-[Inter,sans-serif] text-sm font-medium text-[#1a73e8]">Today</button>
      <IconButton icon="dots" label="Options" size={17} className="w-9" />
    </div>
    <div className="flex min-h-0 flex-1">
      <div className="min-w-0 flex-1 overflow-hidden pt-2 pr-[17px] pl-4">
        <EventCard title="Meet up with Owen re CAF application" time="10:00 – 12:00, Alfresco Coffee Roasters" />
        <div className="-mt-[5px] flex items-center">
          <span className="size-3 rounded-full bg-[#ea4335]" />
          <span className="h-[2px] flex-1 bg-[#ea4335]" />
        </div>
        <h2 className="mt-[17px] mb-3 font-[Inter,sans-serif] text-[15px] leading-5 font-medium">Tue, 16 Feb</h2>
        {tuesday.map((event) => <EventCard key={event.title} {...event} />)}
        <h2 className="mt-[22px] mb-3 font-[Inter,sans-serif] text-[15px] leading-5 font-medium">Wed, 17 Feb</h2>
        {wednesday.map((event) => <EventCard key={event.title} {...event} />)}
      </div>
      <Scrollbar thumbClass="top-[338px] h-[45px]" />
    </div>
    <button className="flex h-[53px] shrink-0 items-center border-t border-[#ececec] pt-1 pl-[19px] font-[Inter,sans-serif] text-sm font-medium text-[#1a73e8]">
      <Icon name="plus" size={15} className="mr-[10px] [stroke-width:2.5]" />
      Create an event
    </button>
  </aside>
)

const Grip = () => (
  <svg width="10" height="32" viewBox="0 0 10 32" className="shrink-0" aria-hidden="true">
    {[1, 5, 9, 13, 17, 21, 25, 29].map((y) => (
      <g key={y}>
        <path d={`M1 ${y}h2v2H1zM4 ${y}h2v2H4zM7 ${y}h2v2H7z`} fill="#16212e" />
        <path d={`M2 ${y + 1}h1v1H2zM5 ${y + 1}h1v1H5zM8 ${y + 1}h1v1H8z`} fill="#93a3b3" />
      </g>
    ))}
  </svg>
)

const pinned = [
  {
    name: "Viber",
    art: (
      <>
        <path d="M16 1c9 0 14 3.500 14 13s-4 13.500-12 14l-5 4v-5C5 25 2 21 2 14 2 4.500 7 1 16 1z" fill="#7d51e0" stroke="#fff" strokeWidth="1.500" />
        <path d="M10 7c-3 2-2 6 2 10s8 7 11 4l-4-4-2.500 1.200L12.300 14l1.200-3z" fill="#fff" />
        <path d="M17 7c4 0 7 3 7 7M17 10c2.500 0 4 1.500 4 4M17 4.500c5.500 0 9.500 4 9.500 9.500" fill="none" stroke="#fff" strokeWidth="1.300" />
      </>
    ),
  },
  {
    name: "Thunderbird",
    art: (
      <>
        <path d="M7 7C11 0 22-1 27 6c6 8 5 18 0 22-5 4-11 4-14 2z" fill="#1a57a5" />
        <path d="M1 10c3-1 5-5 9-7 6-3 14-2 17 3-5-1-8 1-10 5L3 14z" fill="#3f97e2" />
        <path d="M27 6c5 6 5 14 1 20-1-6-3-12-9-14z" fill="#2a75c8" />
        <path d="M5 13l14-1 4 12-10 6-8-4c-2-4-2-9 0-13z" fill="#eef2f6" />
        <path d="M5 13l8 7 6-8" fill="none" stroke="#a9b3c0" strokeWidth="1.200" />
        <path d="M1 22c2 5 7 9 12 8l-7-5z" fill="#3f97e2" />
      </>
    ),
  },
  {
    name: "OpenCPN",
    art: (
      <>
        <path d="M0 0h32v32H0z" fill="#f6f1dd" />
        <path d="M0 0h15c4 5-6 8-3 13s-6 7-4 13l-3 6H0z" fill="#d9b877" />
        <path d="M16 0c4 6-5 8-3 13s-6 8-4 14l-2 5" fill="none" stroke="#aecbe8" strokeWidth="2.500" />
        <ellipse cx="23" cy="23" rx="5" ry="6.500" fill="none" stroke="#111" strokeWidth="2.200" transform="rotate(20 23 23)" />
      </>
    ),
  },
  {
    name: "Video player",
    art: (
      <>
        <circle cx="17" cy="17" r="13" fill="#e6ebf0" />
        <path d="M5 13A13 13 0 0 1 22 5c-7 0-11 4-12 11z" fill="#2b78bd" />
        <path d="M9 24c5 5 12 5 18 1-3 4-7 5-10 5s-6-2-8-6z" fill="#9cb6cf" />
        <path d="M2 12c8 5 18 8 29 7l-1 8C18 28 8 24 3 19z" fill="#15181c" />
        <path d="M5 15l1 4M10 18l1 4M15 20l1 4M20 22v3M26 22v3" stroke="#5c7488" strokeWidth="2" />
      </>
    ),
  },
  {
    name: "Internet Explorer",
    art: (
      <>
        <path d="M25 23a10.500 10.500 0 1 1 1.500-6H8" fill="none" stroke="#3fb4ec" strokeWidth="5" />
        <path d="M3 30C-1 24 10 8 21 3c6-2.500 9 0 7 5" fill="none" stroke="#fbc62c" strokeWidth="2.500" />
      </>
    ),
  },
  {
    name: "File Explorer",
    open: true,
    art: (
      <>
        <path d="M2 3h10l3 4h14v22H2z" fill="#e9c968" />
        <path d="M5 4h4v3H5z" fill="#2f9c4a" /><path d="M13 7h5v3h-5z" fill="#cf3c33" /><path d="M20 9h6v2h-6z" fill="#3a7fc8" />
        <path d="M2 10h24l4 2v18H2z" fill="#f8e5a0" />
        <path d="M5 31V19h22v12h-5v-7H10v7z" fill="#8fd0ef" stroke="#5ba9d0" />
      </>
    ),
  },
  {
    name: "Firefox",
    open: true,
    focused: true,
    art: (
      <>
        <path d="M17 5l5-5c0 5 8 8 8 17A14 14 0 1 1 3 13c0-4 2-7 4-9l3 4c2-2 5-3 7-3z" fill="#ff6a2b" />
        <path d="M21 0c0 5 9 9 9 17s-6 14-13 14c8-3 10-9 8-14-2-4-7-5-5-12z" fill="#ffbf28" />
        <circle cx="17" cy="18" r="7" fill="#7542d8" />
        <path d="M3 15c4-3 9-2 12 0-4 1-4 4-2 6s6 1 8-1c0 5-4 8-9 7S3 21 3 15z" fill="#f5315f" />
      </>
    ),
  },
  { name: "Google Calendar", art: null },
  {
    name: "LibreOffice",
    open: true,
    art: (
      <>
        <path d="M7 2h4v29H7z" fill="#14283c" />
        <path d="M12 8h12l5 5v18H12z" fill="#c9d9b4" stroke="#6f9a35" />
        <path d="M15 19h12v9H15zM15 23.500h12M21 19v9" fill="#f6f9ee" stroke="#71a52c" strokeWidth="2" />
        <path d="M2 4c6-4 8-1 11 2 4-4 8-5 11-2-5 0-8 3-11 7-3-5-6-7-11-7zM0 12c5-2 9 0 12 3l8-5c-3 6-8 8-12 7-2-3-4-5-8-5z" fill="#fff" />
      </>
    ),
  },
  {
    name: "Acrobat",
    open: true,
    art: (
      <>
        <rect x="2" y="2" width="28" height="28" rx="5" fill="#b30b00" />
        <path d="M8 22c4-2 9-9 8-14-.5-2-3-1-2 2 1 5 4 9 9 10 3 .5 3-2 0-2-5 0-11 2-14 4-2 1.500-2.500 0-1 0z" fill="none" stroke="#fff" strokeWidth="1.800" />
      </>
    ),
  },
]

const tray: ReactNode[] = [
  <><path d="M2 1c5 0 10 4 13 10l-4 2-7-4z" fill="#111" /><path d="M2 1c5 0 10 4 13 10" stroke="#ddd" fill="none" /><circle cx="5" cy="9" r="3" fill="#eee" /><path d="M1 15l8-4M2 12l6 4" stroke="#eee" strokeWidth="1.500" /></>,
  <><path d="M1 1h7v6H1z" fill="#e9a13a" /><path d="M9 1h7v6H9z" fill="#2a9ad4" /><path d="M1 8h7v6H1z" fill="#4aa54c" /><path d="M9 8h6v8H9z" fill="#d9402c" /></>,
  <><path d="M2.500 1v15" stroke="#fff" strokeWidth="1.500" /><path d="M4 2h5v1.500h6v6H9.500V8H4z" fill="#fff" /></>,
  <><rect width="16" height="16" rx="2" fill="#e5732a" /><path d="M8 2c2 2-2 3 0 6M4 9h7v2H5zM11 9c2 0 2 2 0 2M3 13h10" stroke="#fff" fill="none" strokeWidth="1.300" /></>,
  <path d="M1.500 14v-2M4.500 14v-4M7.500 14V8M10.500 14V6M13.500 14V3" stroke="#dfe5ea" strokeWidth="2" />,
  <><path d="M1 1h14v10H1z" fill="#8e8e8e" /><path d="M2 13h4v2H2zM10 13h4v2h-4z" fill="#aaa" /></>,
  <><rect width="16" height="16" rx="2" fill="#3b9ee8" /><path d="M3 7V3h4M9 3l4 4M13 3L9 7M2 10h5v3H2M9 10h4v4H9z" stroke="#fff" fill="none" /></>,
  <><path d="M1 6h3l4-4v12l-4-4H1z" fill="#fff" /><path d="M10 5.500c1.500 1.500 1.500 3.500 0 5M12 4c2.500 2 2.500 6 0 8" stroke="#fff" fill="none" /></>,
  <><rect x="2" width="12" height="16" rx="5" fill="#0f357c" /><path d="M5 5l6 6L8 13.500v-11L11 5l-6 6" stroke="#fff" fill="none" strokeWidth="1.300" /></>,
  <path d="M8.500 3.500h6v11h-6zM10 2h3M0 4h6M1.500 4V1M4.500 4V1M1 4v3h4V4M3 7v8" stroke="#fff" fill="none" strokeWidth="1.400" />,
]

const Taskbar = () => (
  <footer className="flex h-10 shrink-0 items-center bg-linear-to-r from-[#68777d] via-[#3b5068] via-35% to-[#384d63] font-['Open_Sans',sans-serif] text-white">
    <button aria-label="Start" className="flex w-[50px] justify-center">
      <svg width="27" height="27" viewBox="0 0 27 27" fill="#fff"><path d="M0 4l12-2v11H0zM13.500 1.800L27 0v13H13.500zM0 14.500h12v11l-12-2zM13.500 14.500H27V27l-13.500-2z" /></svg>
    </button>
    <Grip />
    <div className="ml-[6px] flex">
      {pinned.map((app) => (
        <button
          key={app.name}
          aria-label={app.name}
          className={clsx(
            "mx-[2px] flex h-[39px] w-[58px] items-center justify-center border",
            !app.open && "border-transparent",
            app.open && !app.focused && "border-[#8a97a6] bg-[#5c6d7f]",
            app.focused && "border-[#d3d8dd] bg-[#929da9]"
          )}
        >
          {app.art ? <svg width="32" height="32" viewBox="0 0 32 32">{app.art}</svg> : <CalendarLogo size={26} />}
        </button>
      ))}
    </div>
    <div className="ml-auto flex items-center">
      <Grip />
      <button aria-label="Touch keyboard" className="mr-[14px] ml-[11px]">
        <svg width="30" height="18" viewBox="0 0 30 18" fill="none" stroke="#1c2733"><path d="M.5.500h29v17H.5z" fill="#fff" /><path d="M3 3.500h24v11H3zM3 7.200h24M3 11h24M7 3v8M11 3v8M15 3v8M19 3v8M23 3v11M8 11v4" /></svg>
      </button>
      <div className="flex gap-2">
        {tray.map((art, i) => (
          <svg key={i} width="16" height="16" viewBox="0 0 16 16">{art}</svg>
        ))}
      </div>
      <div className="ml-[14px] text-[11px] leading-[17px]"><p>ENG</p><p>INTL</p></div>
      <div className="mr-4 ml-[14px] text-center text-[11px] leading-[17px]"><p>1:52 PM</p><p>15/02/2021</p></div>
    </div>
  </footer>
)

export default function App() {
  return (
    <div className="flex h-screen flex-col overflow-hidden bg-white font-[Roboto,sans-serif]">
      <BrowserChrome />
      <div className="flex min-h-0 flex-1">
        <div className="flex min-w-0 flex-1 flex-col">
          <GmailHeader />
          <div className="flex min-h-0 flex-1">
            <Sidebar />
            <main className="flex min-w-0 flex-1 flex-col">
              <MailToolbar />
              <div className="flex min-h-0 flex-1">
                <Conversation />
                <Scrollbar thumbClass="top-[105px] h-[356px]" />
              </div>
            </main>
            <SidePanel />
          </div>
        </div>
        <CalendarPanel />
      </div>
      <Taskbar />
    </div>
  )
}
